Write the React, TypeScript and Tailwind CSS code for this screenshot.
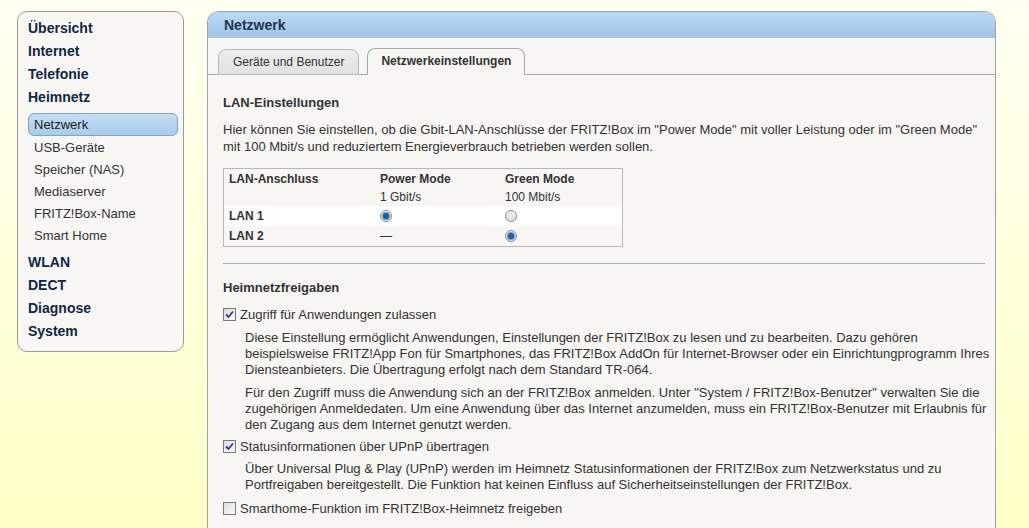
import React from 'react';

const font = { fontFamily: '"Liberation Sans", Arial, sans-serif' };

function Radio({ checked }: { checked: boolean }) {
  return (
    <span className="inline-flex h-[12px] w-[12px] items-center justify-center rounded-full border border-[#8a8a8a] bg-gradient-to-b from-[#f4f4f4] to-[#dcdcdc]">
      {checked && <span className="h-[6px] w-[6px] rounded-full bg-[#1f5f9a] shadow-[0_0_0_1px_#5fa0d8]" />}
    </span>
  );
}

function Checkbox({ checked }: { checked: boolean }) {
  return (
    <span className="inline-flex h-[13px] w-[13px] shrink-0 items-center justify-center border border-[#7a7a7a] bg-gradient-to-br from-[#dcdcdc] to-[#fbfbfb]">
      {checked && (
        <svg width="9" height="9" viewBox="0 0 9 9">
          <path d="M1 4.5 L3.5 7 L8 1.5" fill="none" stroke="#2b3f8a" strokeWidth="1.8" />
        </svg>
      )}
    </span>
  );
}

const topItems = ['Übersicht', 'Internet', 'Telefonie', 'Heimnetz'];
const subItems = ['Netzwerk', 'USB-Geräte', 'Speicher (NAS)', 'Mediaserver', 'FRITZ!Box-Name', 'Smart Home'];
const bottomItems = ['WLAN', 'DECT', 'Diagnose', 'System'];

function Sidebar() {
  return (
    <div className="w-[167px] shrink-0 self-start rounded-[10px] border border-[#9a9a9a] bg-[#f8f7f3] pt-[5px] pb-[8px] pl-[10px] pr-[5px]">
      {topItems.map((t) => (
        <div key={t} className="h-[23px] leading-[23px] text-[14px] font-bold text-[#0f2748]">{t}</div>
      ))}
      <div className="mt-[4px] mb-[4px]">
        {subItems.map((t, i) => (
          <div
            key={t}
            className={
              i === 0
                ? 'mb-[1px] h-[23px] leading-[21px] rounded-[6px] border border-[#7ea4c8] bg-gradient-to-b from-[#c3ddf4] to-[#a9cbec] pl-[5px] text-[13px] text-[#222]'
                : 'h-[22px] leading-[22px] pl-[6px] text-[13px] text-[#333]'
            }
          >
            {t}
          </div>
        ))}
      </div>
      {bottomItems.map((t) => (
        <div key={t} className="h-[23px] leading-[23px] text-[14px] font-bold text-[#0f2748]">{t}</div>
      ))}
    </div>
  );
}

function Main() {
  return (
    <div className="w-[789px] shrink-0 rounded-t-[12px] border border-b-0 border-[#9aa3a8] bg-[#f7f6f2] min-h-[540px]">
      <div className="h-[26px] rounded-t-[11px] bg-gradient-to-b from-[#b8d8f4] to-[#a2c5e6] pl-[16px] leading-[26px] text-[14px] font-bold text-[#243650]">
        Netzwerk
      </div>
      <div className="flex items-end gap-[8px] border-b border-[#a8a8a8] pl-[10px] pt-[10px]">
        <div className="mb-[-1px] h-[26px] rounded-t-[8px] border border-[#b8b8b8] bg-gradient-to-b from-[#ececec] to-[#e2e2e0] px-[14px] leading-[24px] text-[12px] text-[#333]">
          Geräte und Benutzer
        </div>
        <div className="mb-[-1px] h-[27px] rounded-t-[8px] border border-b-0 border-[#a8a8a8] bg-[#f7f6f2] px-[13px] leading-[25px] text-[12px] font-bold text-[#333]">
          Netzwerkeinstellungen
        </div>
      </div>
      <div className="pl-[15px] pr-[10px] text-[13px] text-[#333]">
        <div className="mt-[19px] text-[13px] font-bold leading-[17px]">LAN-Einstellungen</div>
        <p className="mt-[10px] leading-[17px]">
          Hier können Sie einstellen, ob die Gbit-LAN-Anschlüsse der FRITZ!Box im "Power Mode" mit voller Leistung oder im "Green Mode" mit 100 Mbit/s und reduziertem Energieverbrauch betrieben werden sollen.
        </p>
        <div className="mt-[13px] w-[400px] border border-[#b8b8b8] text-[12px]">
          <div className="flex pt-[1px]">
            <div className="w-[156px] pl-[5px] font-bold leading-[18px]">LAN-Anschluss</div>
            <div className="w-[125px] leading-[18px]">
              <div className="font-bold">Power Mode</div>
              <div>1 Gbit/s</div>
            </div>
            <div className="leading-[18px]">
              <div className="font-bold">Green Mode</div>
              <div>100 Mbit/s</div>
            </div>
          </div>
          <div className="flex h-[20px] items-center bg-white">
            <div className="w-[156px] pl-[5px] font-bold">LAN 1</div>
            <div className="w-[125px] flex"><Radio checked /></div>
            <div className="flex"><Radio checked={false} /></div>
          </div>
          <div className="flex h-[20px] items-center">
            <div className="w-[156px] pl-[5px] font-bold">LAN 2</div>
            <div className="w-[125px]">—</div>
            <div className="flex"><Radio checked /></div>
          </div>
        </div>
        <div className="mt-[16px] border-t border-[#a9b5b0]" />
        <div className="mt-[15px] font-bold leading-[17px]">Heimnetzfreigaben</div>
        <label className="mt-[10px] flex items-center gap-[4px] leading-[17px]">
          <Checkbox checked />
          <span>Zugriff für Anwendungen zulassen</span>
        </label>
        <div className="pl-[22px] mr-[-8px] leading-[16px]">
          <p className="mt-[7px]">
            Diese Einstellung ermöglicht Anwendungen, Einstellungen der FRITZ!Box zu lesen und zu bearbeiten. Dazu gehören beispielsweise FRITZ!App Fon für Smartphones, das FRITZ!Box AddOn für Internet-Browser oder ein Einrichtungprogramm Ihres Diensteanbieters. Die Übertragung erfolgt nach dem Standard TR-064.
          </p>
          <p className="mt-[7px]">
            Für den Zugriff muss die Anwendung sich an der FRITZ!Box anmelden. Unter "System / FRITZ!Box-Benutzer" verwalten Sie die zugehörigen Anmeldedaten. Um eine Anwendung über das Internet anzumelden, muss ein FRITZ!Box-Benutzer mit Erlaubnis für den Zugang aus dem Internet genutzt werden.
          </p>
        </div>
        <label className="mt-[5px] flex items-center gap-[4px] leading-[17px]">
          <Checkbox checked />
          <span>Statusinformationen über UPnP übertragen</span>
        </label>
        <div className="pl-[22px] mr-[-8px] leading-[16px]">
          <p className="mt-[6px]">
            Über Universal Plug &amp; Play (UPnP) werden im Heimnetz Statusinformationen der FRITZ!Box zum Netzwerkstatus und zu Portfreigaben bereitgestellt. Die Funktion hat keinen Einfluss auf Sicherheitseinstellungen der FRITZ!Box.
          </p>
        </div>
        <label className="mt-[7px] flex items-center gap-[4px] leading-[17px]">
          <Checkbox checked={false} />
          <span>Smarthome-Funktion im FRITZ!Box-Heimnetz freigeben</span>
        </label>
        <div className="pl-[22px] mr-[-8px] leading-[16px]">
          <p className="mt-[8px]">
            Sie können die Smarthome-Funktion (Schalten/Messen) dieser Geräte im Heimnetz auf einfache Weise anderen Geräten im Heimnetz freigeben.
          </p>
        </div>
      </div>
    </div>
  );
}

export default function App() {
  return (
    <div
      style={font}
      className="flex h-[528px] w-[1029px] items-start gap-[23px] overflow-hidden bg-gradient-to-b from-[#fffff2] to-[#ffffc6] pl-[17px] pt-[11px]"
    >
      <Sidebar />
      <Main />
    </div>
  );
}
